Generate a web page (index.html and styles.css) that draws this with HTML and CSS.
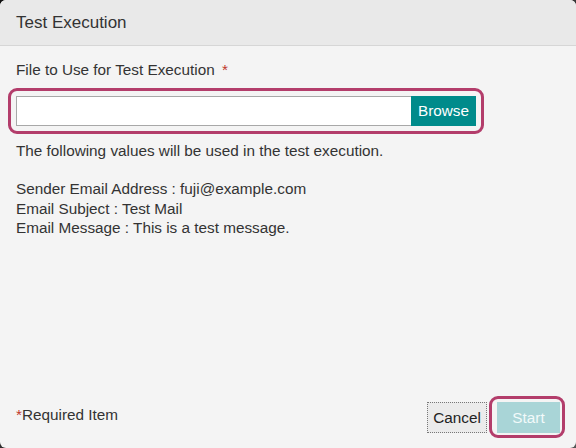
FILE: index.html
```html
<!DOCTYPE html>
<html lang="en">
<head>
<meta charset="utf-8">
<title>Test Execution</title>
<link rel="stylesheet" href="styles.css">
</head>
<body>
<div class="dialog">
  <div class="dialog-header">Test Execution</div>
  <div class="dialog-body">
    <div class="field-label">File to Use for Test Execution <span class="req">*</span></div>
    <div class="highlight file-highlight">
      <div class="file-row">
        <input class="file-input" type="text" value="">
        <button class="browse-btn" type="button">Browse</button>
      </div>
    </div>
    <p class="intro">The following values will be used in the test execution.</p>
    <div class="values">
      <div>Sender Email Address : fuji@example.com</div>
      <div>Email Subject : Test Mail</div>
      <div>Email Message : This is a test message.</div>
    </div>
  </div>
  <div class="dialog-footer">
    <div class="required-note"><span class="req">*</span>Required Item</div>
    <div class="actions">
      <button class="cancel-btn" type="button">Cancel</button>
      <div class="highlight start-highlight">
        <button class="start-btn" type="button" disabled>Start</button>
      </div>
    </div>
  </div>
</div>
</body>
</html>
```

FILE: styles.css
```css
html {
  background: linear-gradient(135deg, #111 0%, #555 100%);
  height: 100%;
}
body {
  margin: 0;
  width: 576px;
  height: 448px;
  font-family: "Liberation Sans", Arial, sans-serif;
  font-size: 15.3px;
  color: #333;
}
.dialog {
  width: 576px;
  height: 448px;
  background: #f4f4f4;
  border-radius: 6px;
  overflow: hidden;
  display: flex;
  flex-direction: column;
  box-sizing: border-box;
}
.dialog-header {
  height: 45px;
  line-height: 45px;
  padding-left: 16px;
  font-size: 17px;
  background: #e9e9e9;
  border-bottom: 1px solid #d6d6d6;
  color: #333;
}
.dialog-body {
  flex: 1;
  padding: 14px 16px 0 16px;
  line-height: 19.2px;
}
.field-label {
  line-height: 20px;
}
.req {
  color: #c0392b;
}
.field-label .req {
  margin-left: 3px;
}
.highlight {
  border: 3px solid #b33d6b;
  border-radius: 9px;
}
.file-highlight {
  margin: 8px 0 0 -8px;
  width: 476px;
  box-sizing: border-box;
  padding: 5px;
}
.file-row {
  display: flex;
  height: 30px;
}
.file-input {
  flex: 1;
  min-width: 0;
  margin: 0;
  height: 30px;
  box-sizing: border-box;
  border: 1px solid #a8a8a8;
  border-right: none;
  background: #fff;
  padding: 0 6px;
  font: inherit;
  outline: none;
}
.browse-btn {
  width: 65px;
  height: 30px;
  margin: 0;
  border: none;
  background: #008b8b;
  color: #fff;
  font-family: "Liberation Sans", Arial, sans-serif;
  font-size: 15.3px;
  padding: 0;
}
.intro {
  margin: 7px 0 0 0;
}
.values {
  margin-top: 19.2px;
}
.dialog-footer {
  display: flex;
  justify-content: space-between;
  align-items: center;
  padding: 0 11px 10px 16px;
}
.required-note {
  line-height: 20px;
  padding-bottom: 4px;
}
.actions {
  display: flex;
  align-items: center;
  gap: 2px;
}
.cancel-btn {
  width: 60px;
  height: 31px;
  box-sizing: border-box;
  border: 1px dotted #777;
  background: #ebebeb;
  color: #222;
  font-family: "Liberation Sans", Arial, sans-serif;
  font-size: 15.3px;
  padding: 0;
  margin-top: 1px;
}
.start-highlight {
  padding: 3px 2px 2px 5px;
}
.start-btn {
  display: block;
  width: 63px;
  height: 31px;
  border: none;
  background: #a9d5d7;
  color: #f2fafa;
  font-family: "Liberation Sans", Arial, sans-serif;
  font-size: 15.3px;
  padding: 0;
}
```
